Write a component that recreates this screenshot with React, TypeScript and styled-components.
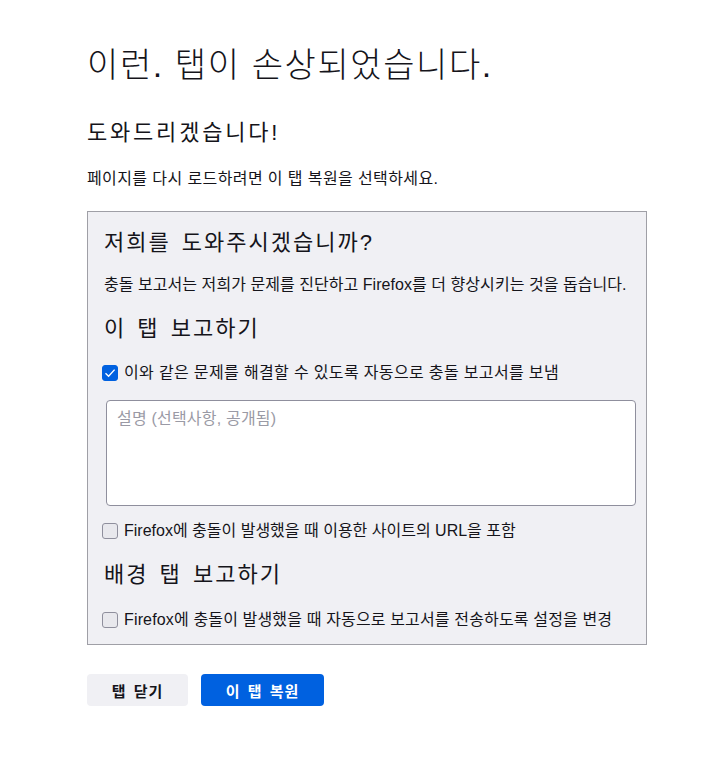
import React, { useState } from 'react';
import styled, { createGlobalStyle } from 'styled-components';

const GlobalStyle = createGlobalStyle`
  html, body {
    margin: 0;
    padding: 0;
    background: #fff;
  }
  body {
    font-family: 'Liberation Sans', 'Noto Sans CJK KR', sans-serif;
    color: #15141a;
  }
`;

const Page = styled.main`
  padding: 45px 0 40px 87px;
  width: 560px;
`;

const Title = styled.h1`
  margin: 0;
  font-size: 34px;
  line-height: 40px;
  font-weight: 300;
  letter-spacing: 1.6px;
`;

const SubTitle = styled.h2`
  margin: 33px 0 0;
  font-size: 22px;
  line-height: 30px;
  font-weight: 400;
  letter-spacing: 2.8px;
`;

const Text = styled.p<{ $gap?: number; $spacing?: number }>`
  margin: ${(p) => p.$gap ?? 0}px 0 0;
  font-size: 16px;
  line-height: 20px;
  letter-spacing: ${(p) => p.$spacing ?? 0.4}px;
  white-space: nowrap;
`;

const ReportBox = styled.section`
  margin-top: 22px;
  padding: 16px 16px 14px;
  background: #f0f0f4;
  border: 1px solid #9f9fa6;
`;

const BoxHeading = styled.h3<{ $gap?: number }>`
  margin: ${(p) => p.$gap ?? 0}px 0 0;
  font-size: 22px;
  line-height: 30px;
  font-weight: 400;
  letter-spacing: 2px;
  word-spacing: 3px;
`;

const CheckRow = styled.label<{ $gap: number; $spacing: number }>`
  display: flex;
  align-items: center;
  gap: 6px;
  margin-top: ${(p) => p.$gap}px;
  margin-left: -2px;
  font-size: 16px;
  line-height: 20px;
  letter-spacing: ${(p) => p.$spacing}px;
  white-space: nowrap;
  cursor: pointer;
`;

const Box = styled.span<{ $checked: boolean }>`
  width: 16px;
  height: 16px;
  box-sizing: border-box;
  flex-shrink: 0;
  border-radius: 3px;
  display: flex;
  align-items: center;
  justify-content: center;
  background: ${(p) => (p.$checked ? '#0061e0' : '#e8e8ed')};
  border: 1px solid ${(p) => (p.$checked ? '#0061e0' : '#8f8f9d')};
`;

const Comments = styled.textarea`
  display: block;
  box-sizing: border-box;
  margin: 17px 0 0 2px;
  width: 530px;
  height: 106px;
  padding: 8px 10px;
  resize: none;
  border: 1px solid #8f8f9d;
  border-radius: 4px;
  background: #fff;
  font-family: inherit;
  font-size: 16px;
  line-height: 20px;
  letter-spacing: 0.2px;
  color: #15141a;
  &::placeholder {
    color: #9a9aa5;
  }
`;

const Buttons = styled.div`
  display: flex;
  gap: 13px;
  margin-top: 29px;
`;

const Button = styled.button<{ $primary?: boolean; $width: number }>`
  width: ${(p) => p.$width}px;
  height: 32px;
  padding: 0;
  border: none;
  border-radius: 4px;
  font-family: inherit;
  font-size: 15px;
  font-weight: 700;
  letter-spacing: 1px;
  word-spacing: 2px;
  cursor: pointer;
  background: ${(p) => (p.$primary ? '#0061e0' : '#f0f0f4')};
  color: ${(p) => (p.$primary ? '#fff' : '#15141a')};
`;

const Check = ({ checked, onToggle, children, gap, spacing = 0.15 }: {
  checked: boolean;
  onToggle: () => void;
  children: React.ReactNode;
  gap: number;
  spacing?: number;
}) => (
  <CheckRow $gap={gap} $spacing={spacing} onClick={onToggle}>
    <Box $checked={checked}>
      {checked && (
        <svg width="12" height="12" viewBox="0 0 12 12">
          <path d="M1.5 6.2 L4.6 9.2 L10.6 2.6" fill="none" stroke="#fff" strokeWidth="1.4" />
        </svg>
      )}
    </Box>
    <span>{children}</span>
  </CheckRow>
);

export default function App() {
  const [sendReport, setSendReport] = useState(true);
  const [includeUrl, setIncludeUrl] = useState(false);
  const [autoSubmit, setAutoSubmit] = useState(false);

  return (
    <>
      <GlobalStyle />
      <Page>
        <Title>이런. 탭이 손상되었습니다.</Title>
        <SubTitle>도와드리겠습니다!</SubTitle>
        <Text $gap={21}>페이지를 다시 로드하려면 이 탭 복원을 선택하세요.</Text>

        <ReportBox>
          <BoxHeading>저희를 도와주시겠습니까?</BoxHeading>
          <Text $gap={17} $spacing={0.05}>
            충돌 보고서는 저희가 문제를 진단하고 Firefox를 더 향상시키는 것을 돕습니다.
          </Text>
          <BoxHeading $gap={19}>이 탭 보고하기</BoxHeading>
          <Check gap={19} spacing={0.35} checked={sendReport} onToggle={() => setSendReport(!sendReport)}>
            이와 같은 문제를 해결할 수 있도록 자동으로 충돌 보고서를 보냄
          </Check>
          <Comments placeholder="설명 (선택사항, 공개됨)" />
          <Check gap={15} spacing={0} checked={includeUrl} onToggle={() => setIncludeUrl(!includeUrl)}>
            Firefox에 충돌이 발생했을 때 이용한 사이트의 URL을 포함
          </Check>
          <BoxHeading $gap={19}>배경 탭 보고하기</BoxHeading>
          <Check gap={20} spacing={0.15} checked={autoSubmit} onToggle={() => setAutoSubmit(!autoSubmit)}>
            Firefox에 충돌이 발생했을 때 자동으로 보고서를 전송하도록 설정을 변경
          </Check>
        </ReportBox>

        <Buttons>
          <Button $width={101}>탭 닫기</Button>
          <Button $width={123} $primary>이 탭 복원</Button>
        </Buttons>
      </Page>
    </>
  );
}
